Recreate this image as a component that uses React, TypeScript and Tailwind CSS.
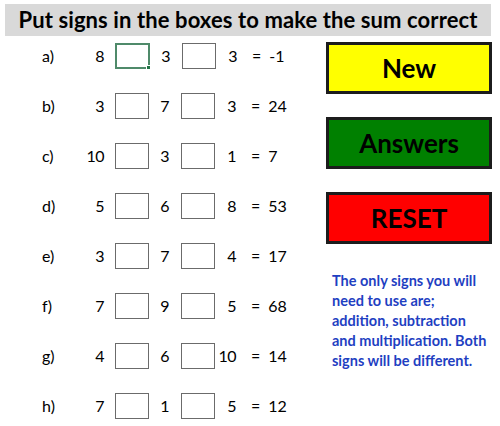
const ROWS = [
  { label: 'a)', a: 8, b: 3, c: 3, r: '-1' },
  { label: 'b)', a: 3, b: 7, c: 3, r: '24' },
  { label: 'c)', a: 10, b: 3, c: 1, r: '7' },
  { label: 'd)', a: 5, b: 6, c: 8, r: '53' },
  { label: 'e)', a: 3, b: 7, c: 4, r: '17' },
  { label: 'f)', a: 7, b: 9, c: 5, r: '68' },
  { label: 'g)', a: 4, b: 6, c: 10, r: '14' },
  { label: 'h)', a: 7, b: 1, c: 5, r: '12' },
];

const NOTE = [
  'The only signs you will',
  'need to use are;',
  'addition, subtraction',
  'and multiplication. Both',
  'signs will be different.',
];

function SignBox({ selected = false }: { selected?: boolean }) {
  if (selected) {
    return (
      <div className="relative w-[35px] h-[26px] border-2 border-[#4f8a6a] bg-white">
        <div className="absolute -right-[3px] -bottom-[3px] w-[5px] h-[5px] bg-[#217346] border border-white" />
      </div>
    );
  }
  return <div className="w-[34px] h-[26px] border border-[#6b6b6b] bg-white" />;
}

export default function App() {
  return (
    <div
      className="w-[500px] h-[426px] bg-white overflow-hidden text-black"
      style={{ fontFamily: 'Lato, "Open Sans", sans-serif' }}
    >
      {/* title bar */}
      <div className="mt-[4px] ml-[5px] w-[486px] h-[32px] bg-[#d9d9d9] flex items-center justify-center">
        <h1 className="text-[22px] font-bold leading-none tracking-[0.1px]">
          Put signs in the boxes to make the sum correct
        </h1>
      </div>

      <div className="flex">
        {/* sums */}
        <div className="w-[326px] pt-[7px] flex flex-col gap-[24px] text-[16px]">
          {ROWS.map((row, i) => (
            <div key={row.label} className="h-[26px] flex items-center">
              <span className="ml-[42px] w-[40px]">{row.label}</span>
              <span className="w-[33px] pr-[11px] text-right tracking-[-0.5px]">{row.a}</span>
              <SignBox selected={i === 0} />
              <span className="w-[32px] text-center">{row.b}</span>
              <SignBox />
              <span className="w-[21px] text-right tracking-[-0.5px]">{row.c}</span>
              <span className="ml-[15px]">=</span>
              <span className="ml-[8px]">{row.r}</span>
            </div>
          ))}
        </div>

        {/* controls */}
        <div className="pt-[6px] flex flex-col">
          <div className="flex flex-col gap-[23px]">
            <button className="w-[166px] h-[52px] border-[3px] border-[#1c1c1c] bg-[#ffff00] text-[26px] font-bold">
              New
            </button>
            <button className="w-[166px] h-[52px] border-[3px] border-[#1c1c1c] bg-[#008000] text-[26px] font-bold">
              Answers
            </button>
            <button className="w-[166px] h-[52px] border-[3px] border-[#1c1c1c] bg-[#ff0000] text-[26px] font-bold">
              RESET
            </button>
          </div>
          <p className="mt-[27px] ml-[6px] text-[14.5px] leading-[20px] font-bold text-[#1f3fc2] whitespace-nowrap">
            {NOTE.map((line) => (
              <span key={line} className="block">
                {line}
              </span>
            ))}
          </p>
        </div>
      </div>
    </div>
  );
}
